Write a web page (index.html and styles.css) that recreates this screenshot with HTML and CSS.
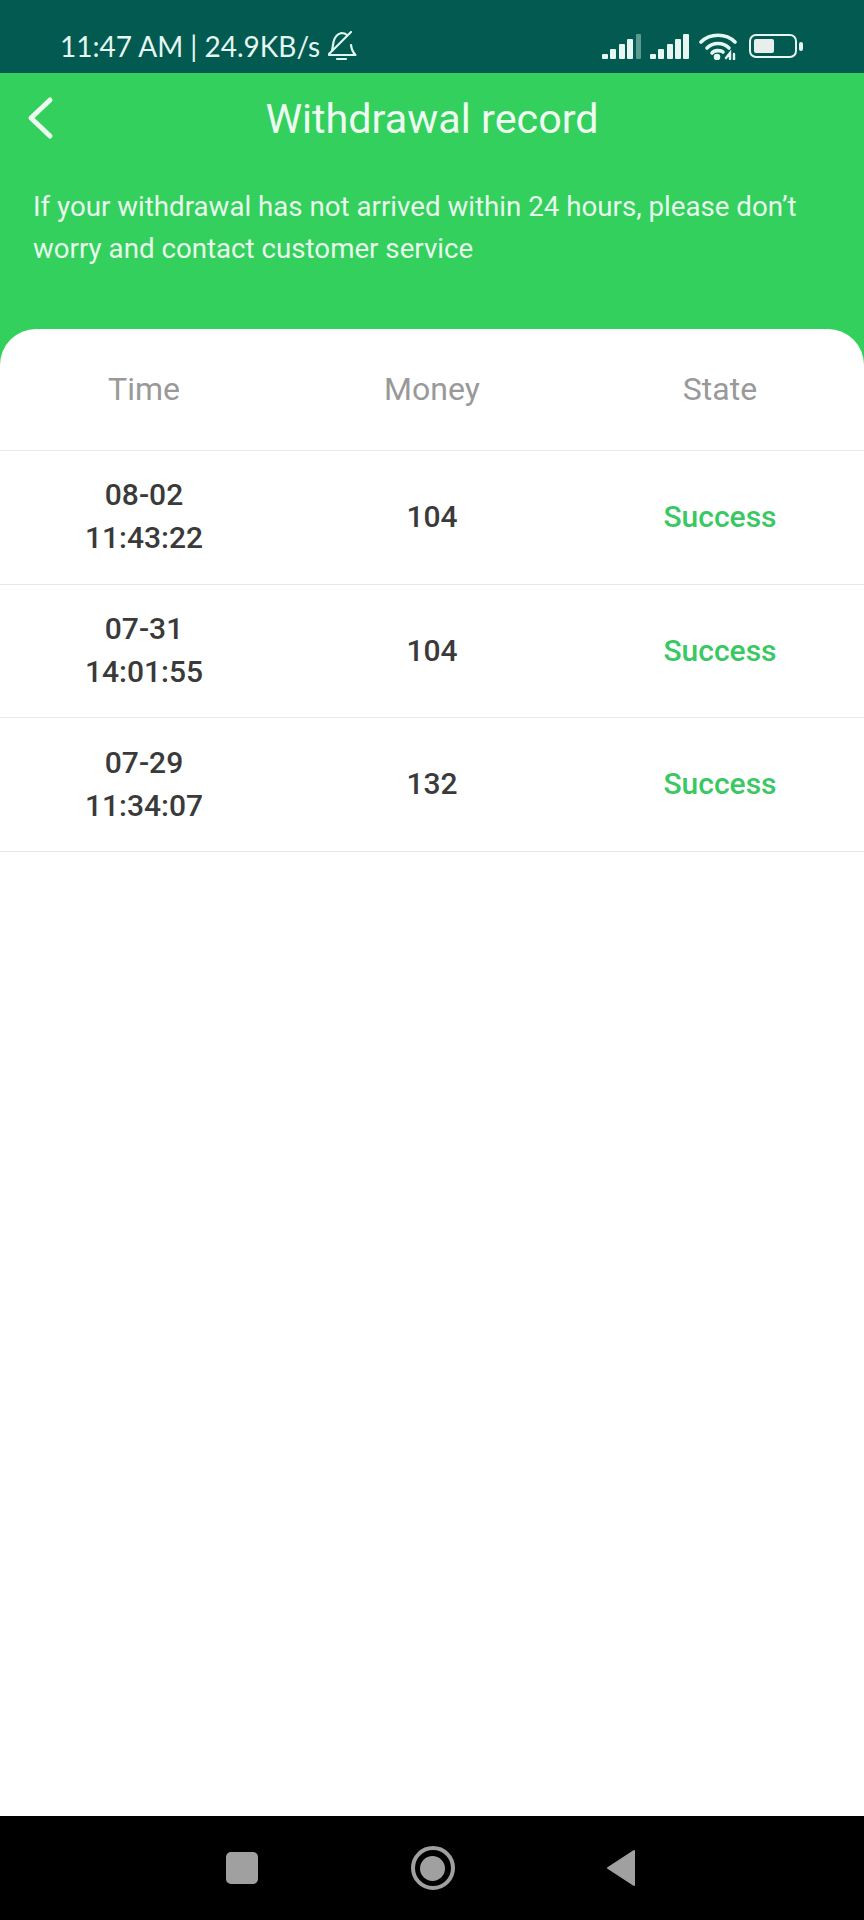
FILE: index.html
```html
<!DOCTYPE html>
<html>
<head>
    <title>Withdrawal record</title>
    <link rel="stylesheet" href="styles.css">
</head>
<body>
    <div class="page">
        <div class="status-bar">
            <div class="status-left">
                <span class="status-text">11:47 AM | 24.9KB/s</span>
                <svg class="bell" width="29" height="30" viewBox="0 0 29 30" fill="none" stroke="#dff5f0" stroke-width="2.2" stroke-linecap="round" stroke-linejoin="round">
                    <path d="M1 24h26.5c-3-3-4-6-4.5-10"/>
                    <path d="M4 20l1.5-9c1-5 4-8 8-9 2 0 4 .5 5.5 2"/>
                    <path d="M1 23L23 1"/>
                    <path d="M9 28h9"/>
                </svg>
            </div>
            <div class="status-right">
                <svg class="signal" width="39" height="25" viewBox="0 0 39 25" fill="#e4f7f2">
                    <rect x="0" y="20" width="6" height="5" rx="1"/>
                    <rect x="8" y="15" width="6" height="10" rx="1"/>
                    <rect x="17" y="10" width="6" height="15" rx="1"/>
                    <rect x="25" y="5" width="6" height="20" rx="1"/>
                    <rect x="34" y="0" width="5" height="25" rx="1" opacity="0.4"/>
                </svg>
                <svg class="signal" width="39" height="25" viewBox="0 0 39 25" fill="#e4f7f2">
                    <rect x="0" y="20" width="6" height="5" rx="1"/>
                    <rect x="8" y="15" width="6" height="10" rx="1"/>
                    <rect x="17" y="10" width="6" height="15" rx="1"/>
                    <rect x="25" y="5" width="6" height="20" rx="1"/>
                    <rect x="33" y="0" width="6" height="25" rx="1"/>
                </svg>
                <svg class="wifi" width="38" height="27" viewBox="0 0 38 27" fill="none" stroke="#e4f7f2" stroke-width="3.6" stroke-linecap="round">
                    <path d="M2 9c9-9 25-9 34 0"/>
                    <path d="M8 15c6-6 16-6 22 0"/>
                    <path d="M13 20c2-3 9-3 11-1"/>
                    <circle cx="18" cy="24" r="1.5" fill="#e4f7f2"/>
                    <path d="M27 25l4-5v6M35 21v6" stroke-width="2.4"/>
                </svg>
                <div class="battery">
                    <div class="battery-box"><div class="battery-fill"></div></div>
                    <div class="battery-tip"></div>
                </div>
            </div>
        </div>

        <div class="top-bar">
            <svg class="back" width="28" height="44" viewBox="0 0 28 44" fill="none" stroke="#eefbf1" stroke-width="5" stroke-linecap="round" stroke-linejoin="round">
                <path d="M24 4L5 22l19 18"/>
            </svg>
            <h1>Withdrawal record</h1>
        </div>
        <p class="notice">If your withdrawal has not arrived within 24 hours, please don’t worry and contact customer service</p>

        <div class="card">
            <div class="row head">
                <div>Time</div>
                <div>Money</div>
                <div>State</div>
            </div>
            <div class="row">
                <div class="time">08-02<br>11:43:22</div>
                <div class="money">104</div>
                <div class="state">Success</div>
            </div>
            <div class="row">
                <div class="time">07-31<br>14:01:55</div>
                <div class="money">104</div>
                <div class="state">Success</div>
            </div>
            <div class="row">
                <div class="time">07-29<br>11:34:07</div>
                <div class="money">132</div>
                <div class="state">Success</div>
            </div>
        </div>

        <div class="nav-bar">
            <div class="nav-square"></div>
            <div class="nav-home"><div class="nav-dot"></div></div>
            <svg width="28" height="36" viewBox="0 0 28 36" fill="#a0a0a0" stroke="#a0a0a0" stroke-width="2" stroke-linejoin="round">
                <path d="M1 18L27 1v34z"/>
            </svg>
        </div>
    </div>
</body>
</html>
```

FILE: styles.css
```css
* {
    box-sizing: border-box;
}

body {
    margin: 0;
    font-family: Roboto, "Liberation Sans", sans-serif;
}

.page {
    width: 864px;
    height: 1920px;
    display: flex;
    flex-direction: column;
    background-color: #33d05d;
}

.status-bar {
    height: 73px;
    flex: none;
    display: flex;
    justify-content: space-between;
    align-items: center;
    padding: 19px 61px 0 60px;
    background-color: #025a50;
    color: #e4f7f2;
}

.status-left {
    display: flex;
    align-items: center;
    gap: 8px;
}

.status-text {
    font-family: Lato, sans-serif;
    font-size: 28px;
    line-height: 30px;
}

.status-right {
    display: flex;
    align-items: center;
    gap: 9px;
}

.wifi {
    margin-left: 1px;
    margin-right: 3px;
}

.battery {
    display: flex;
    align-items: center;
    gap: 2px;
}

.battery-box {
    width: 48px;
    height: 24px;
    padding: 3px;
    border: 2.5px solid #e4f7f2;
    border-radius: 7px;
}

.battery-fill {
    width: 20px;
    height: 100%;
    background-color: #e8eeec;
    border-radius: 2px;
}

.battery-tip {
    width: 4px;
    height: 9px;
    background-color: #e4f7f2;
    border-radius: 2px;
}

.top-bar {
    height: 90px;
    flex: none;
    position: relative;
    display: flex;
    justify-content: center;
    align-items: center;
    padding-top: 2px;
}

.back {
    position: absolute;
    left: 26px;
    top: 23px;
}

h1 {
    margin: 0;
    font-size: 41.3px;
    font-weight: 400;
    color: #eefbf1;
}

.notice {
    height: 166px;
    flex: none;
    margin: 0;
    padding: 23px 30px 0 33px;
    font-size: 27.7px;
    line-height: 41.5px;
    color: #e6f9eb;
}

.card {
    flex: 1;
    background-color: #fff;
    border-radius: 36px 36px 0 0;
}

.row {
    height: 133.7px;
    padding-bottom: 2px;
    display: grid;
    grid-template-columns: repeat(3, 1fr);
    align-items: center;
    text-align: center;
    border-bottom: 1px solid #e8e8e8;
    font-size: 30px;
    font-weight: 500;
    color: #3a3a3a;
}

.row.head {
    height: 122px;
    padding-bottom: 2px;
    font-size: 32px;
    font-weight: 400;
    color: #999;
}

.time {
    line-height: 43px;
}

.state {
    color: #3ac863;
}

.nav-bar {
    height: 104px;
    flex: none;
    display: flex;
    justify-content: space-between;
    align-items: center;
    padding: 0 229px 0 226px;
    background-color: #000;
}

.nav-square {
    width: 32px;
    height: 32px;
    background-color: #a0a0a0;
    border-radius: 5px;
}

.nav-home {
    width: 44px;
    height: 44px;
    display: flex;
    justify-content: center;
    align-items: center;
    border: 4px solid #a0a0a0;
    border-radius: 50%;
}

.nav-dot {
    width: 25px;
    height: 25px;
    background-color: #a0a0a0;
    border-radius: 50%;
}
```
